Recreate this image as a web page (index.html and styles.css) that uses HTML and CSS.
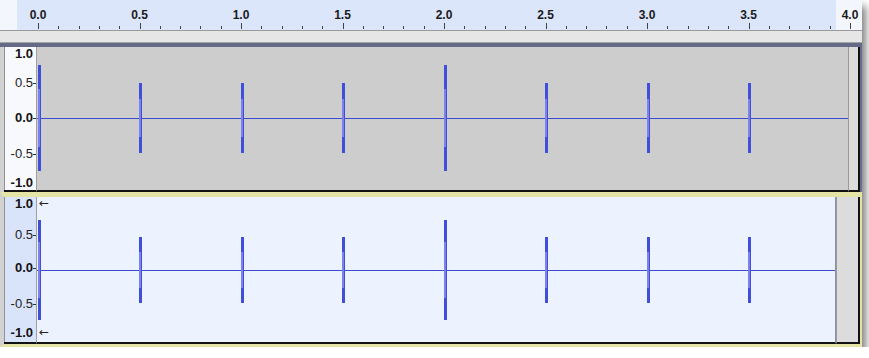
FILE: index.html
```html
<!DOCTYPE html>
<html lang="en">
<head>
  <meta charset="UTF-8">
  <title>Tracks</title>
  <link rel="stylesheet" href="styles.css">
</head>
<body>
  <div class="window">
    <div class="timeline">
      <svg class="time-svg" width="862" height="30">
        <rect x="0" y="0" width="862" height="30" fill="#f3f6fd"/>
        <rect x="17" y="0" width="819" height="30" fill="#dbe6fa"/>
        <g id="ticks" stroke="#444" stroke-width="1"></g>
        <g class="time-labels">
          <text x="38" y="19">0.0</text>
          <text x="139.5" y="19">0.5</text>
          <text x="241" y="19">1.0</text>
          <text x="342.5" y="19">1.5</text>
          <text x="444" y="19">2.0</text>
          <text x="545.5" y="19">2.5</text>
          <text x="647" y="19">3.0</text>
          <text x="748.5" y="19">3.5</text>
          <text x="850" y="19">4.0</text>
        </g>
      </svg>
    </div>
    <div class="band"></div>
    <div class="sep"></div>

    <div class="track track-plain">
      <div class="vruler">
        <span class="mark bold" style="top:0px">1.0</span>
        <span class="mark" style="top:29px">0.5<i class="dash"></i></span>
        <span class="mark bold" style="top:64px">0.0<i class="dash"></i></span>
        <span class="mark" style="top:100px">-0.5<i class="dash"></i></span>
        <span class="mark bold" style="top:129px">-1.0</span>
      </div>
      <div class="wave">
        <svg class="wave-svg" width="811" height="142" data-mid="71" data-big="53" data-small="35"></svg>
      </div>
      <div class="strip"></div>
    </div>

    <div class="track track-sel">
      <div class="vruler">
        <span class="mark bold" style="top:0px">1.0</span>
        <span class="mark" style="top:31px">0.5<i class="dash"></i></span>
        <span class="mark bold" style="top:64px">0.0<i class="dash"></i></span>
        <span class="mark" style="top:100px">-0.5<i class="dash"></i></span>
        <span class="mark bold" style="top:129px">-1.0</span>
        <span class="arrow" style="top:-1px">&larr;</span>
        <span class="arrow" style="top:128px">&larr;</span>
      </div>
      <div class="wave">
        <svg class="wave-svg" width="798" height="144" data-mid="73" data-big="50" data-small="33"></svg>
      </div>
      <div class="strip"></div>
    </div>
  </div>

  <script>
    // ruler ticks every 0.1 s
    var ticks = document.getElementById('ticks');
    var ns = 'http://www.w3.org/2000/svg';
    for (var i = 0; i <= 41; i++) {
      var x = Math.round(38 + i * 20.3) + 0.5;
      var line = document.createElementNS(ns, 'line');
      line.setAttribute('x1', x);
      line.setAttribute('x2', x);
      line.setAttribute('y1', i % 5 === 0 ? 23 : 26);
      line.setAttribute('y2', 29);
      ticks.appendChild(line);
    }

    // spikes: one click every 0.5 s, louder on whole seconds 0 and 2
    var spots = [1, 102, 204, 305, 407, 508, 610, 711];
    document.querySelectorAll('.wave-svg').forEach(function (svg) {
      var mid = +svg.dataset.mid;
      var w = +svg.getAttribute('width');
      var html = '<line x1="0" x2="' + w + '" y1="' + (mid + 0.5) + '" y2="' + (mid + 0.5) + '" stroke="#3c4bd4"/>';
      spots.forEach(function (x, n) {
        var a = (n === 0 || n === 4) ? +svg.dataset.big : +svg.dataset.small;
        var r = Math.round(a * 0.55);
        html += '<rect x="' + x + '" y="' + (mid - a) + '" width="3" height="' + (a * 2) + '" fill="#3f4fd9"/>';
        html += '<rect x="' + x + '" y="' + (mid - r) + '" width="2" height="' + (r * 2) + '" fill="#7b82ee"/>';
      });
      svg.innerHTML = html;
    });
  </script>
</body>
</html>
```

FILE: styles.css
```css
body {
  margin: 0;
  background-color: #fff;
  font-family: "Liberation Sans", Arial, sans-serif;
}

.window {
  width: 862px;
  height: 347px;
  display: flex;
  flex-direction: column;
  background-color: #6b7090;
  box-shadow: 4px 6px 8px rgba(0, 0, 0, 0.5);
}

.timeline {
  height: 30px;
}

.time-svg {
  display: block;
}

.time-labels text {
  font-size: 12px;
  font-weight: bold;
  fill: #1a1a1a;
  text-anchor: middle;
}

.band {
  height: 11px;
  background-color: #e6e6e6;
  border-top: 1px solid #9a9a9a;
  border-bottom: 1px solid #a4a4a4;
}

.sep {
  height: 4px;
  background-color: #646a88;
}

.track {
  display: flex;
  box-sizing: border-box;
  border-left: 4px solid #d2d2d2;
}

.track-plain {
  height: 145px;
  border-right: 2px solid #6b7090;
}

.track-plain .vruler {
  background-color: #f8f9fd;
  border-bottom: 2px solid #111;
}

.track-plain .wave {
  width: 811px;
  background-color: #cdcdcd;
  border-bottom: 2px solid #111;
}

.track-sel {
  height: 155px;
  border-top: 5px solid #e4e4a6;
  border-bottom: 3px solid #e4e4a6;
  border-right: 2px solid #e4e4a6;
}

.track-sel .vruler {
  background-color: #d9e4fa;
  border-bottom: 2px solid #111;
}

.track-sel .wave {
  width: 798px;
  background-color: #edf3fe;
  border-right: 1px solid #8a90b0;
  border-bottom: 2px solid #111;
}

.vruler {
  position: relative;
  width: 32px;
  border-right: 1px solid #a0a0a0;
  box-shadow: inset 1px 0 0 #909090;
}

.mark {
  position: absolute;
  right: 3px;
  font-size: 13px;
  line-height: 14px;
  color: #222;
}

.mark.bold {
  font-weight: bold;
  color: #111;
}

.dash {
  position: absolute;
  right: -3px;
  top: 7px;
  width: 3px;
  height: 1px;
  background-color: #333;
}

.arrow {
  position: absolute;
  left: 35px;
  font-family: "DejaVu Sans", sans-serif;
  font-size: 12px;
  line-height: 14px;
  color: #222;
}

.wave-svg {
  display: block;
}

.strip {
  flex: 1;
  background-color: #dcdcdc;
  border-left: 1px solid #9a9a9a;
  border-right: 2px solid #111;
  border-bottom: 2px solid #111;
}
```
